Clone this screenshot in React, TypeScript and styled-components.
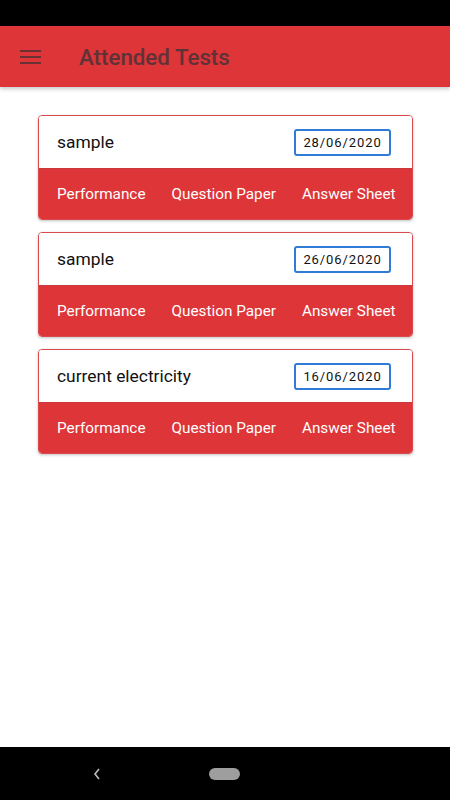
import React from 'react';
import styled, { createGlobalStyle } from 'styled-components';

// == styles =======================================================================================
const Global = createGlobalStyle`
  html, body {
    margin: 0;
    padding: 0;
    background: #ffffff;
  }
  body {
    font-family: Roboto, 'Noto Sans', sans-serif;
  }
`;

const Screen = styled.div`
  width: 450px;
  height: 800px;
  display: flex;
  flex-direction: column;
  background: #ffffff;
  overflow: hidden;
`;

const StatusBar = styled.div`
  height: 26px;
  flex-shrink: 0;
  background: #000000;
`;

const AppBar = styled.div`
  position: relative;
  z-index: 1;
  height: 61px;
  flex-shrink: 0;
  display: flex;
  align-items: center;
  padding-left: 20px;
  background: #dd3538;
  box-shadow: 0 2px 4px rgba(0, 0, 0, 0.22);
`;

const MenuButton = styled.div`
  width: 21px;
  display: flex;
  flex-direction: column;
  gap: 4px;
  margin-top: 1px;
`;

const MenuLine = styled.span`
  display: block;
  height: 2px;
  background: #6a3033;
`;

const Title = styled.h1`
  margin: 1px 0 0 38px;
  font-size: 22.3px;
  font-weight: 500;
  color: #5e3236;
`;

const Content = styled.div`
  flex-grow: 1;
  display: flex;
  flex-direction: column;
  gap: 12px;
  padding: 28px 37px 0 38px;
`;

const Card = styled.div`
  border: 1px solid #d84a4d;
  border-radius: 4px;
  overflow: hidden;
  box-shadow: 0 1px 3px rgba(0, 0, 0, 0.25);
`;

const CardHead = styled.div`
  height: 52px;
  display: flex;
  align-items: center;
  justify-content: space-between;
  padding: 0 21px 0 18px;
  background: #ffffff;
  border-bottom: 1px solid #c9393c;
`;

const TestName = styled.span`
  font-size: 17.4px;
  color: #111111;
`;

const DateBox = styled.span`
  width: 97px;
  height: 27px;
  box-sizing: border-box;
  display: flex;
  align-items: center;
  justify-content: center;
  border: 2px solid #2f7bd6;
  border-radius: 3px;
  font-size: 13px;
  letter-spacing: 0.9px;
  color: #111111;
`;

const Actions = styled.div`
  height: 50px;
  display: flex;
  align-items: center;
  gap: 26px;
  padding-left: 18px;
  background: #dd3538;
`;

const Action = styled.span`
  font-size: 15.3px;
  color: #ffffff;
`;

const NavBar = styled.div`
  height: 53px;
  flex-shrink: 0;
  display: flex;
  align-items: center;
  background: #000000;
`;

const BackIcon = styled.svg`
  margin-left: 92px;
`;

const HomePill = styled.span`
  margin-left: 107px;
  width: 31px;
  height: 12px;
  border-radius: 6px;
  background: #9e9e9e;
`;

// == data =========================================================================================
const tests = [
  { name: 'sample', date: '28/06/2020' },
  { name: 'sample', date: '26/06/2020' },
  { name: 'current electricity', date: '16/06/2020' },
];

// == element ======================================================================================
export default function App() {
  return <>
    <Global />
    <Screen>
      <StatusBar />
      <AppBar>
        <MenuButton>
          <MenuLine />
          <MenuLine />
          <MenuLine />
        </MenuButton>
        <Title>Attended Tests</Title>
      </AppBar>
      <Content>
        { tests.map( ( test, i ) => (
          <Card key={ i }>
            <CardHead>
              <TestName>{ test.name }</TestName>
              <DateBox>{ test.date }</DateBox>
            </CardHead>
            <Actions>
              <Action>Performance</Action>
              <Action>Question Paper</Action>
              <Action>Answer Sheet</Action>
            </Actions>
          </Card>
        ) ) }
      </Content>
      <NavBar>
        <BackIcon width="10" height="14" viewBox="0 0 10 14">
          <path d="M7 2 L3 7 L7 12" fill="none" stroke="#bdbdbd" strokeWidth="1.6" />
        </BackIcon>
        <HomePill />
      </NavBar>
    </Screen>
  </>;
}
